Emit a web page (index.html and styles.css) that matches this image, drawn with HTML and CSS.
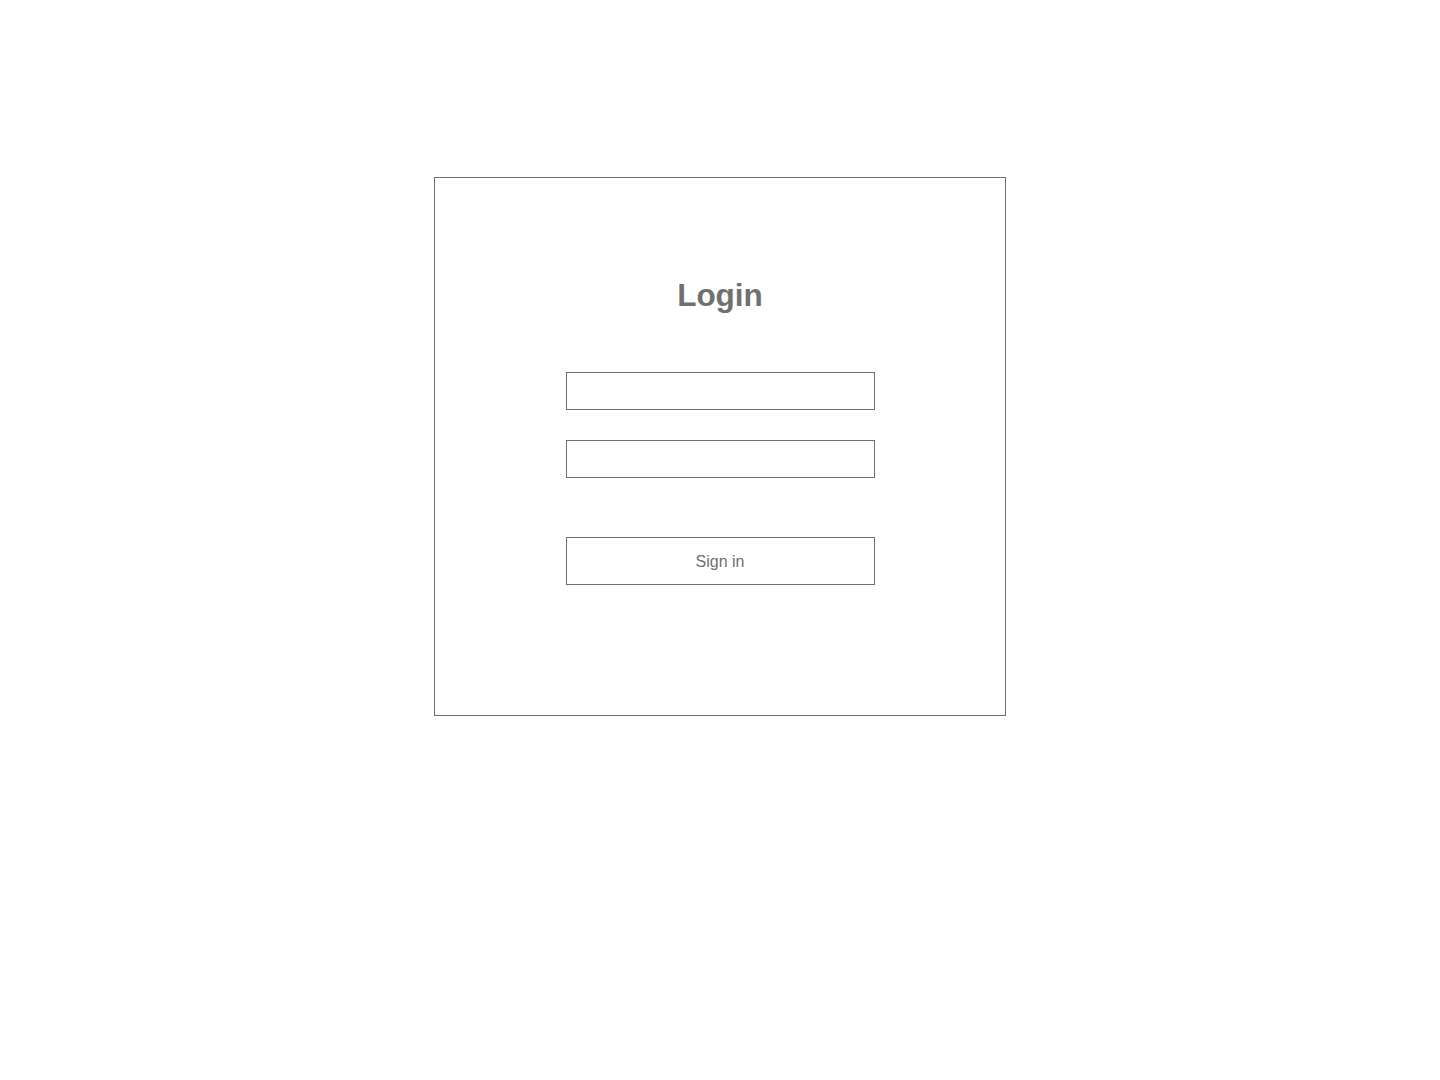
FILE: index.html
```html
<!DOCTYPE html>
<html lang="en">
<head>
<meta charset="utf-8">
<title>Login</title>
<link rel="stylesheet" href="styles.css">
</head>
<body>
<main class="card">
  <h1 class="title">Login</h1>
  <form class="form">
    <input class="field" type="text" aria-label="Username">
    <input class="field" type="password" aria-label="Password">
    <button class="btn" type="button">Sign in</button>
  </form>
</main>
</body>
</html>
```
FILE: styles.css
```css
html, body {
  margin: 0;
  padding: 0;
  background: #ffffff;
}
body {
  font-family: "Liberation Sans", Arial, sans-serif;
  color: #707070;
}
.card {
  box-sizing: border-box;
  width: 572px;
  height: 539px;
  margin: 177px auto 0;
  border: 1px solid #6e6e6e;
  padding-top: 99px;
  display: flex;
  flex-direction: column;
  align-items: center;
}
.title {
  margin: 0;
  font-size: 31.5px;
  line-height: 36px;
  font-weight: 700;
  color: #707070;
}
.form {
  margin-top: 59px;
  width: 309px;
  display: flex;
  flex-direction: column;
}
.field {
  box-sizing: border-box;
  width: 309px;
  height: 38px;
  margin: 0;
  border: 1px solid #6e6e6e;
  border-radius: 0;
  background: #fff;
  padding: 0 8px;
  font: 16px "Liberation Sans", Arial, sans-serif;
  outline: none;
}
.field + .field {
  margin-top: 30px;
}
.btn {
  box-sizing: border-box;
  margin-top: 59px;
  width: 309px;
  height: 48px;
  border: 1px solid #6e6e6e;
  border-radius: 0;
  background: #fff;
  color: #707070;
  font: 16px "Liberation Sans", Arial, sans-serif;
  padding: 2px 0 0;
}
```
